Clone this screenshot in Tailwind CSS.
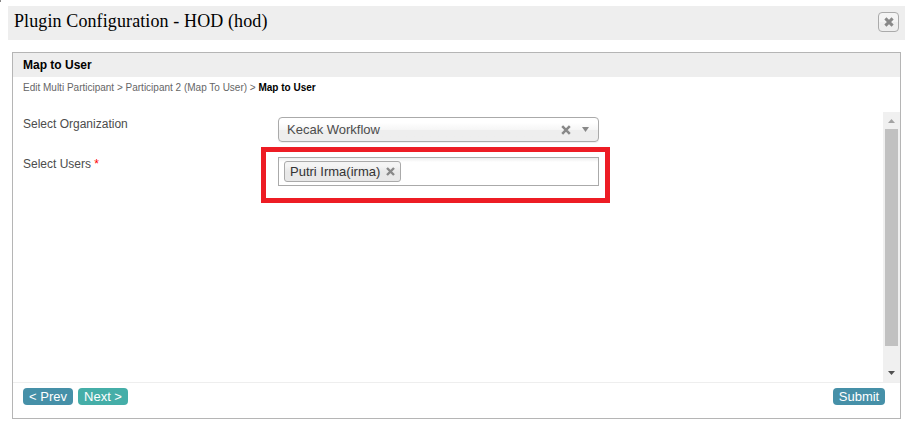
<!DOCTYPE html>
<html lang="en">
<head>
<meta charset="utf-8">
<title>Plugin Configuration</title>
<script src="https://cdn.jsdelivr.net/npm/@tailwindcss/browser@4"></script>
</head>
<body class="bg-white w-[910px] h-[428px] overflow-hidden relative pt-[6px] font-['Liberation_Sans',Arial,sans-serif] text-[#4c4c4c]">
<div class="absolute left-0 top-0 w-px h-[2px] bg-[#888]"></div>
<header class="ml-2 w-[897px] h-[34px] bg-[#eee] flex items-center justify-between pl-[6px] pr-[6px]">
  <h1 class="font-['Liberation_Serif',serif] text-[18px] tracking-[0.11px] leading-[31px] h-[34px] whitespace-nowrap text-black">Plugin Configuration - HOD (hod)</h1>
  <button class="w-[21px] h-[20px] mb-[3px] rounded-[4px] border border-[#aaa] bg-linear-to-b from-[#f4f4f4] from-50% to-[#eee] to-50% flex items-center justify-center">
    <svg width="10" height="10" viewBox="0 0 10 10" class="ml-[1px]"><path d="M1.4 1.4 8.6 8.6M8.6 1.4 1.4 8.6" stroke="#888" stroke-width="3"/></svg>
  </button>
</header>
<main class="mt-3 ml-3 w-[889px] h-[367px] border border-[#b5b5b5] flex flex-col">
  <h2 class="h-6 shrink-0 bg-[#eee] pl-[10px] text-[12px] leading-[25px] font-bold text-black">Map to User</h2>
  <nav class="h-[35px] shrink-0 pl-[10px] text-[10px] leading-[21px] text-[#666] whitespace-nowrap"><span>Edit Multi Participant &gt; Participant 2 (Map To User) &gt; </span><b class="text-black">Map to User</b></nav>
  <section class="h-[271px] shrink-0 flex border-b border-[#eee]">
    <div class="flex-1 pl-[10px] pt-[5px]">
      <div class="flex h-10">
        <label class="w-[255px] text-[12px] leading-[14px]">Select Organization</label>
        <div class="w-[321px] h-[25px] rounded-[4px] border border-[#aaa] bg-linear-to-b from-white from-20% via-[#f6f6f6] via-50% to-[#eee] to-52% flex items-center pl-2 pr-[9px] text-[13px] shadow-[0_1px_1px_#0001]">
          <span class="flex-1 leading-[23px]">Kecak Workflow</span>
          <svg width="10" height="10" viewBox="0 0 10 10"><path d="M1.2 1.2 8.8 8.8M8.8 1.2 1.2 8.8" stroke="#888" stroke-width="2.5"/></svg>
          <svg width="7" height="5" viewBox="0 0 7 5" class="ml-[11px]"><path d="M0 0H7L3.5 5Z" fill="#888"/></svg>
        </div>
      </div>
      <div class="flex">
        <label class="w-[255px] text-[12px] leading-[14px]">Select Users <span class="text-[#f00]">*</span></label>
        <div class="relative w-[321px] h-[29px] border border-[#aaa] bg-linear-to-b from-[#eee] from-1% to-white to-15% pl-[5px] pt-[3px]">
          <div class="w-[117px] h-[21px] rounded-[3px] border border-[#aaa] bg-linear-to-b from-[#f4f4f4] from-20% to-[#e8e8e8] to-52% flex items-center pl-[5px] text-[13px] text-[#333]">
            <span class="leading-[19px] whitespace-nowrap w-[96px]">Putri Irma(irma)</span>
            <svg width="9" height="9" viewBox="0 0 9 9"><path d="M1 1 8 8M8 1 1 8" stroke="#888" stroke-width="2.4"/></svg>
          </div>
          <div class="absolute left-[-18px] top-[-11px] w-[349px] h-[56px] border-5 border-[#ed1c24]"></div>
        </div>
      </div>
    </div>
    <div class="w-[17px] h-[270px] bg-[#f0f0f0] flex flex-col items-center">
      <div class="h-[17px] flex items-center"><svg width="7" height="4" viewBox="0 0 7 4"><path d="M0 4H7L3.5 0Z" fill="#a3a3a3"/></svg></div>
      <div class="w-[13px] h-[217px] bg-[#c1c1c1]"></div>
      <div class="flex-1 flex items-center pt-[17px]"><svg width="7" height="4" viewBox="0 0 7 4"><path d="M0 0H7L3.5 4Z" fill="#505050"/></svg></div>
    </div>
  </section>
  <footer class="flex pt-[5px] pl-[10px] pr-[15px] text-[13px] leading-[17px] text-white">
    <button class="w-[50px] h-[17px] rounded-[4px] bg-[#4690a8]">&lt; Prev</button>
    <button class="w-[50px] h-[17px] rounded-[4px] bg-[#45aea8] ml-[5px]">Next &gt;</button>
    <button class="w-[52px] h-[17px] rounded-[4px] bg-[#4690a8] ml-auto">Submit</button>
  </footer>
</main>
</body>
</html>
